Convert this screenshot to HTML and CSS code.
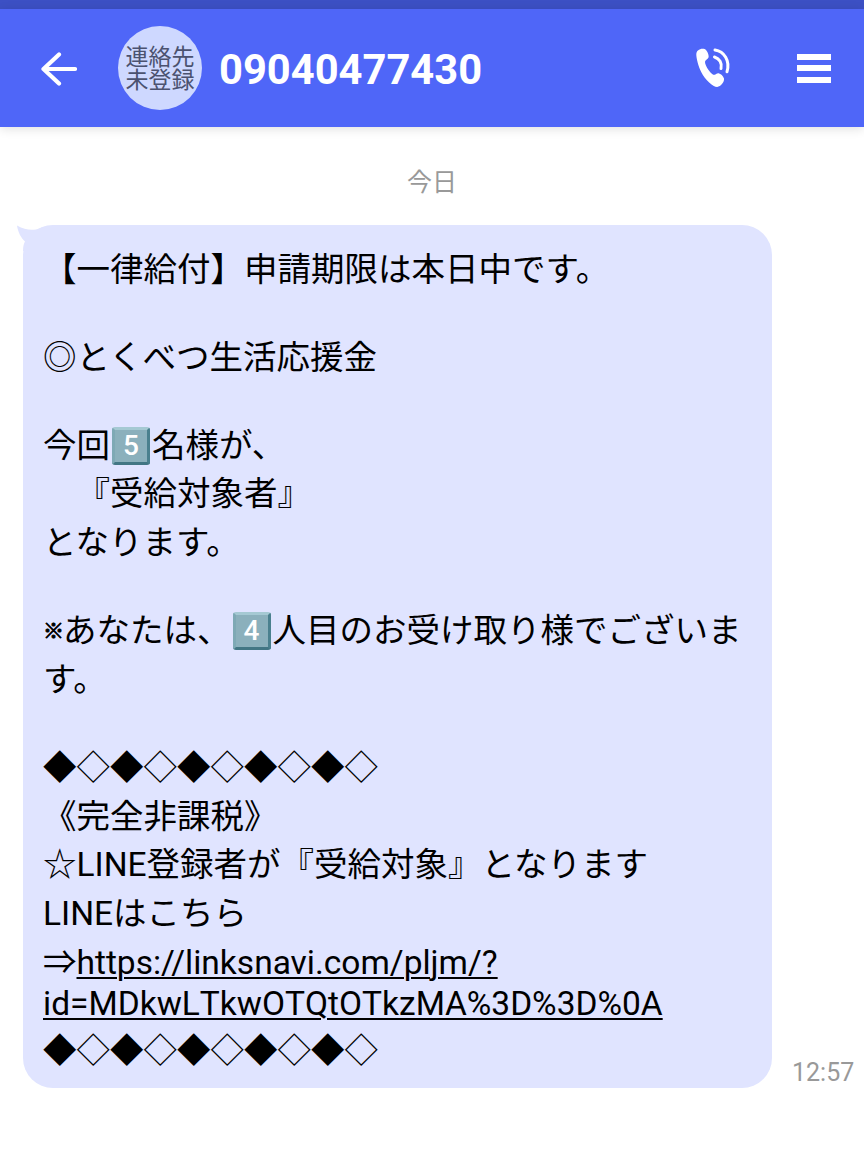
FILE: index.html
```
<!DOCTYPE html>
<html lang="ja">
<head>
  <meta charset="UTF-8">
  <meta name="viewport" content="width=device-width, initial-scale=1.0">
  <title>09040477430</title>
  <link rel="stylesheet" href="styles.css">
</head>
<body>
  <div class="status-bar"></div>
  <header class="header">
    <svg class="icon-back" viewBox="0 0 36 34" width="36" height="34">
      <path d="M18 2.5 L2.5 17 L18 31.5 M2.5 17 H34" fill="none" stroke="#fff" stroke-width="4.2" stroke-linecap="round" stroke-linejoin="round"/>
    </svg>
    <div class="avatar">連絡先<br>未登録</div>
    <h1 class="number">09040477430</h1>
    <svg class="icon-call" viewBox="0 0 36 40" width="36" height="40">
      <path d="M2 2.5 C4.5 0.3 8.5 0.3 10.2 2.2 C12 4.5 13 7.7 12.6 9.3 C12 11.3 9.3 12 9 13.8 C8.8 17.5 14 25 17.2 26.7 C19.2 27.4 20.5 25 22.6 25.2 C24.8 25.6 27.2 28 28 30.6 C28.6 34 24.8 38.6 21.2 39 C17 39 8.7 31.5 5.2 24 C2.4 18.3 0.2 10 0.3 6.2 C0.4 4.4 1 3.2 2 2.5 Z" fill="#fff"/>
      <path d="M18.5 9 C23.5 10.5 26.3 15.2 25 20.5 M19 2 C28.2 3.2 34.3 13 31 23.7" fill="none" stroke="#fff" stroke-width="3" stroke-linecap="round"/>
    </svg>
    <div class="menu">
      <span></span>
      <span></span>
      <span></span>
    </div>
  </header>

  <main class="chat">
    <div class="date">今日</div>
    <div class="message">
      <div class="bubble">
        <svg class="tail" viewBox="0 0 40 30" width="40" height="30">
          <path d="M0 0.5 C7 4.5 13 5.5 19 4.5 L30 1 L30 26 L6 26 C6 21 7 18 8 16.5 C4 13 1 7 0 0.5 Z" fill="#e0e4ff"/>
        </svg>
        <p>【一律給付】申請期限は本日中です。</p>
        <p class="latin"></p>
        <p>◎とくべつ生活応援金</p>
        <p class="latin"></p>
        <p>今回<span class="keycap">5</span>名様が、</p>
        <p>　『受給対象者』</p>
        <p>となります。</p>
        <p class="latin"></p>
        <p><span class="kome">※</span>あなたは、<span class="keycap">4</span>人目のお受け取り様でございます。</p>
        <p class="latin"></p>
        <p>◆◇◆◇◆◇◆◇◆◇</p>
        <p>《完全非課税》</p>
        <p>☆LINE登録者が『受給対象』となります</p>
        <p>LINEはこちら</p>
        <p><span class="cjk">⇒</span><span class="link">https://linksnavi.com/pljm/?</span></p>
        <p class="latin"><span class="link">id=MDkwLTkwOTQtOTkzMA%3D%3D%0A</span></p>
        <p>◆◇◆◇◆◇◆◇◆◇</p>
      </div>
      <time class="time">12:57</time>
    </div>
  </main>
</body>
</html>
```

FILE: styles.css
```
* {
  box-sizing: border-box;
}
body {
  margin: 0;
  background-color: #fff;
  color: #000;
  font-family: Roboto, "Noto Sans CJK JP", sans-serif;
  text-spacing-trim: space-all;
}

/* Cabecera */
.status-bar {
  height: 9px;
  background-color: #3c50c4;
}
.header {
  display: flex;
  align-items: center;
  height: 118px;
  padding: 0 33px 0 41px;
  background-color: #4f66f8;
  box-shadow: 0 2px 10px rgba(0, 0, 0, 0.12);
}
.icon-back {
  margin-top: 2px;
}
.avatar {
  width: 84px;
  height: 84px;
  margin-left: 41px;
  padding-top: 18px;
  border-radius: 50%;
  background-color: #ced8ff;
  color: #4b5270;
  font-family: "Noto Sans CJK JP", sans-serif;
  font-size: 23px;
  font-weight: 400;
  line-height: 23px;
  text-align: center;
}
.number {
  margin: 3px 0 0 17px;
  color: #fff;
  font-size: 41.7px;
  font-weight: 700;
}
.icon-call {
  margin-left: auto;
}
.menu {
  display: flex;
  flex-direction: column;
  gap: 5.5px;
  width: 34px;
  margin-left: 65px;
}
.menu span {
  height: 6px;
  background-color: #fff;
}

/* Mensajes */
.date {
  padding-top: 35px;
  height: 98px;
  color: #999;
  font-size: 25px;
  text-align: center;
}
.message {
  display: flex;
  align-items: flex-end;
  padding-left: 23px;
}
.bubble {
  position: relative;
  width: 749px;
  height: 863px;
  padding: 20.5px 20px 12px;
  border-radius: 30px;
  background-color: #e0e4ff;
  font-size: 33.5px;
}
.tail {
  position: absolute;
  top: 0;
  left: -6px;
}
.bubble p {
  margin: 0;
  line-height: 48.7px;
}
.bubble p.latin {
  height: 39.4px;
  line-height: 32.4px;
  font-kerning: none;
}
.cjk {
  font-family: "Noto Sans CJK JP", sans-serif;
  line-height: 1;
}
.kome {
  display: inline-block;
  width: 20px;
  font-size: 21px;
  -webkit-text-stroke: 0.9px #000;
  vertical-align: 4px;
  line-height: 1;
}
.link {
  text-decoration: underline;
  text-decoration-thickness: 2px;
  text-underline-offset: 3px;
}
.keycap {
  display: inline-block;
  width: 38px;
  height: 38px;
  margin: 0 2px;
  border: 3px solid;
  border-color: #a5c9d3 #4a808e #427684 #7ea9b5;
  border-radius: 3px;
  background-color: #8bb0bc;
  color: #fff;
  font-size: 28px;
  font-weight: 500;
  line-height: 32px;
  text-align: center;
  vertical-align: 2px;
}
.time {
  margin: 0 0 1px 20px;
  color: #999;
  font-size: 25px;
}
```
